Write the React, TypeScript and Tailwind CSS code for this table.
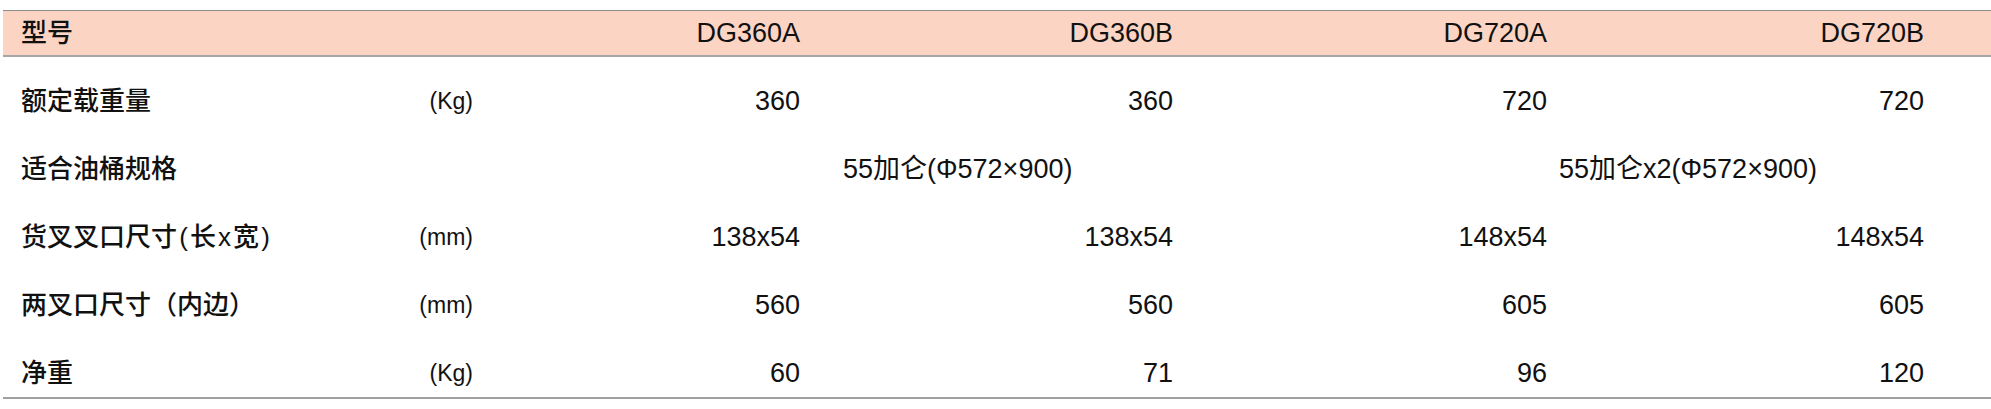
import React from "react";

type Row = {
  label: React.ReactNode;
  key: string;
  unit?: string;
  values?: string[];
  merged?: [string, string];
};

const Paren = ({ c }: { c: string }) => (
  <span className="inline-block w-[13px] text-center">{c}</span>
);

const rows: Row[] = [
  { key: "r1", label: "额定载重量", unit: "(Kg)", values: ["360", "360", "720", "720"] },
  { key: "r2", label: "适合油桶规格", merged: ["55加仑(Φ572×900)", "55加仑x2(Φ572×900)"] },
  {
    key: "r3",
    label: (
      <>
        货叉叉口尺寸<Paren c="(" />长<span className="px-[2px]">x</span>宽<Paren c=")" />
      </>
    ),
    unit: "(mm)",
    values: ["138x54", "138x54", "148x54", "148x54"],
  },
  { key: "r4", label: "两叉口尺寸（内边）", unit: "(mm)", values: ["560", "560", "605", "605"] },
  { key: "r5", label: "净重", unit: "(Kg)", values: ["60", "71", "96", "120"] },
];

const models = ["DG360A", "DG360B", "DG720A", "DG720B"];

const gridCols = "grid grid-cols-[397px_73px_327px_373px_374px_377px_1fr]";

export default function App() {
  return (
    <div
      className="w-full h-[409px] bg-white pt-[10px] text-[#111]"
      style={{ fontFamily: '"Liberation Sans", "Noto Sans CJK SC", sans-serif' }}
    >
      <div className="ml-[3px]">
        {/* header */}
        <div
          className={`${gridCols} h-[47px] items-center bg-[#fcd4c3] border-t border-[#8c8c8c] border-b-2 border-b-[#a6a6a6] text-[27px] leading-none`}
        >
          <div className="pl-[18px] text-[26px] font-medium">型号</div>
          <div />
          {models.map((m) => (
            <div key={m} className="text-right">
              {m}
            </div>
          ))}
          <div />
        </div>

        {/* body */}
        <div className="border-b-2 border-[#a0a0a0]">
          {rows.map((r) => (
            <div key={r.key} className={`${gridCols} h-[68px] items-center pt-[20px]`}>
              <div className="pl-[18px] text-[26px] font-medium leading-none whitespace-nowrap">
                {r.label}
              </div>
              <div className="text-right text-[23px] leading-none">{r.unit}</div>
              {r.merged ? (
                <>
                  <div className="col-span-2 pl-[370px] text-[27px] leading-none whitespace-nowrap">
                    {r.merged[0]}
                  </div>
                  <div className="col-span-2 pl-[386px] text-[27px] leading-none whitespace-nowrap">
                    {r.merged[1]}
                  </div>
                </>
              ) : (
                r.values?.map((v, i) => (
                  <div key={i} className="text-right text-[27px] leading-none">
                    {v}
                  </div>
                ))
              )}
              <div />
            </div>
          ))}
        </div>
      </div>
    </div>
  );
}
